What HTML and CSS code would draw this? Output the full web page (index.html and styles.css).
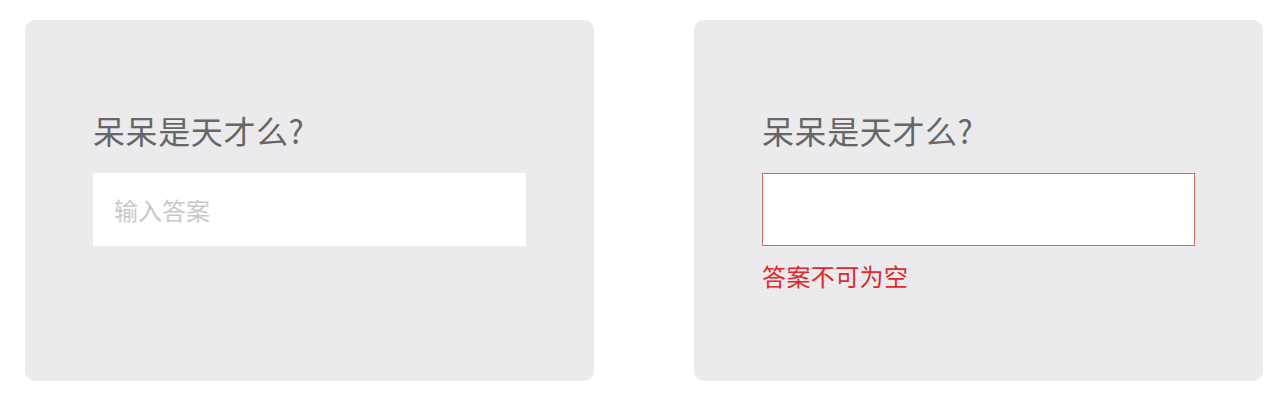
FILE: index.html
```html
<!DOCTYPE html>
<html lang="zh">
<head>
<meta charset="utf-8">
<link rel="stylesheet" href="styles.css">
</head>
<body>
<div class="row">
  <div class="card">
    <div class="question">呆呆是天才么?</div>
    <input class="answer" type="text" placeholder="输入答案">
  </div>
  <div class="card">
    <div class="question">呆呆是天才么?</div>
    <input class="answer invalid" type="text">
    <div class="error">答案不可为空</div>
  </div>
</div>
</body>
</html>
```
FILE: styles.css
```css
html, body {
  margin: 0;
  padding: 0;
  background: #fff;
}
body {
  font-family: "Noto Sans CJK SC", "Noto Sans", sans-serif;
}
.row {
  display: flex;
  gap: 100px;
  padding: 20px 0 0 25px;
}
.card {
  box-sizing: border-box;
  width: 569px;
  height: 361px;
  background: #ebebed;
  border-radius: 10px;
  padding: 86px 68px 0 68px;
  display: flex;
  flex-direction: column;
}
.question {
  font-size: 32px;
  line-height: 48px;
  letter-spacing: 0.6px;
  color: #666;
  margin-bottom: 19px;
}
.answer {
  box-sizing: border-box;
  width: 433px;
  height: 73px;
  margin: 0;
  border: 1px solid transparent;
  background: #fff;
  padding: 0 20px;
  font-family: inherit;
  font-size: 24px;
  color: #333;
  outline: none;
}
.answer::placeholder {
  color: #c8c8c8;
}
.answer.invalid {
  border-color: #d96a6a;
}
.error {
  margin-top: 12px;
  font-size: 24px;
  line-height: 36px;
  letter-spacing: 0.4px;
  color: #e3262a;
}
```
